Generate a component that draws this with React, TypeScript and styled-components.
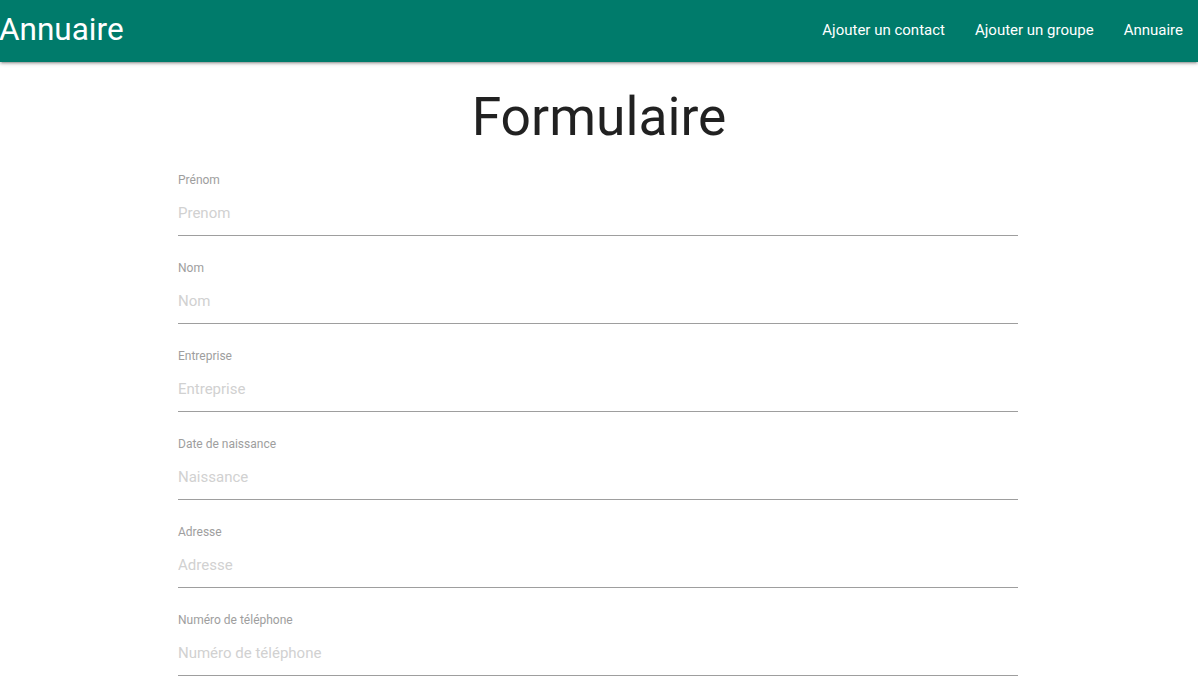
import React from "react";
import styled, { createGlobalStyle } from "styled-components";

const Global = createGlobalStyle`
  html { font-size: 15px; }
  html, body { margin: 0; padding: 0; background: #fff; }
  body { font-family: Roboto, "Noto Sans", sans-serif; color: rgba(0,0,0,0.87); }
  * { box-sizing: border-box; }
`;

const Nav = styled.nav`
  height: 62px;
  background: #007b6b;
  color: #fff;
  display: flex;
  align-items: flex-start;
  justify-content: space-between;
  box-shadow: 0 2px 2px 0 rgba(0,0,0,0.14), 0 3px 1px -2px rgba(0,0,0,0.12), 0 1px 5px 0 rgba(0,0,0,0.2);
`;

const Brand = styled.a`
  font-size: 31.5px;
  color: #fff;
  text-decoration: none;
  line-height: 60px;
  margin-left: -1px;
`;

const Links = styled.ul`
  list-style: none;
  margin: 0;
  padding: 0;
  display: flex;
`;

const NavLink = styled.a`
  display: block;
  padding: 0 15px;
  font-size: 15px;
  line-height: 60px;
  color: #fff;
  text-decoration: none;
`;

const Title = styled.h2`
  margin: 26px 0 25px;
  text-align: center;
  font-size: 53.4px;
  font-weight: 400;
  line-height: 58.7px;
  color: rgba(0,0,0,0.87);
`;

const Form = styled.form`
  width: 842px;
  padding-right: 2px;
  margin: 0 auto;
  display: flex;
  flex-direction: column;
  gap: 24px;
`;

const Field = styled.div`
  display: flex;
  flex-direction: column;
  gap: 2px;
`;

const Label = styled.label`
  font-size: 12px;
  line-height: 16px;
  color: #9e9e9e;
`;

const Input = styled.input`
  height: 46px;
  border: none;
  border-bottom: 1px solid #9e9e9e;
  padding: 2px 0 0;
  font-family: Roboto, sans-serif;
  font-size: 15px;
  outline: none;
  background: transparent;
  &::placeholder { color: #d1d1d1; }
`;

const fields = [
  ["Prénom", "Prenom"],
  ["Nom", "Nom"],
  ["Entreprise", "Entreprise"],
  ["Date de naissance", "Naissance"],
  ["Adresse", "Adresse"],
  ["Numéro de téléphone", "Numéro de téléphone"],
];

export default function App() {
  return (
    <>
      <Global />
      <Nav>
        <Brand href="#">Annuaire</Brand>
        <Links>
          <li><NavLink href="#">Ajouter un contact</NavLink></li>
          <li><NavLink href="#">Ajouter un groupe</NavLink></li>
          <li><NavLink href="#">Annuaire</NavLink></li>
        </Links>
      </Nav>
      <Title>Formulaire</Title>
      <Form>
        {fields.map(([l, p]) => (
          <Field key={l}>
            <Label>{l}</Label>
            <Input placeholder={p} />
          </Field>
        ))}
      </Form>
    </>
  );
}
